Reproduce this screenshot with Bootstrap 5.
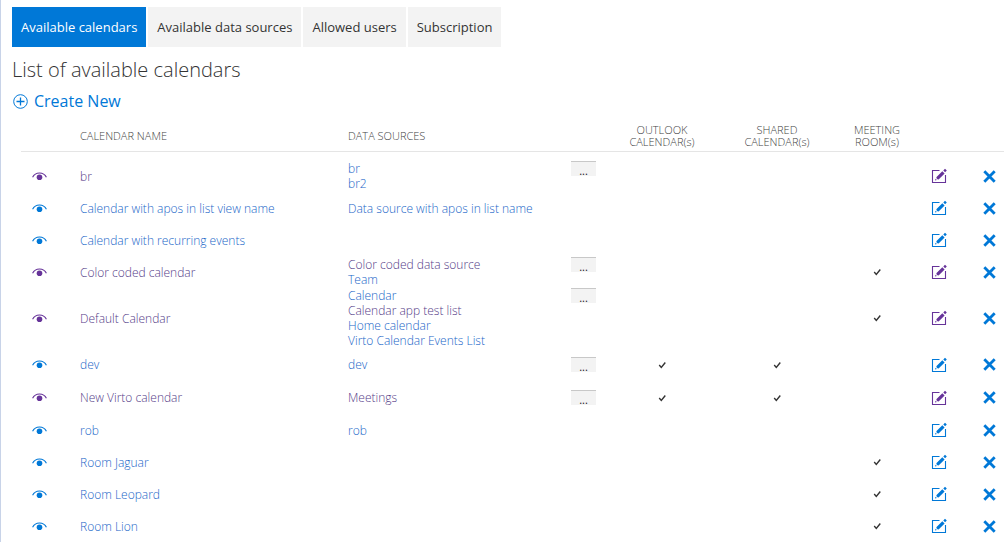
<!DOCTYPE html>
<html lang="en">
<head>
<meta charset="utf-8">
<meta name="viewport" content="width=device-width, initial-scale=1">
<title>Available calendars</title>
<link href="https://cdn.jsdelivr.net/npm/bootstrap@5.3.0/dist/css/bootstrap.min.css" rel="stylesheet">
<style>
  :root { --accent: #0078d7; --visited: #663399; --link: #1a66c8; --link-seen: #553c88; }
  body { font-family: "Open Sans", "Noto Sans", sans-serif; font-size: 12px; line-height: 15px; color: #333; font-weight: 300; background: #fff; }
  main { border-left: 1px solid #c8d3e8; padding: 7px 0 0 11px; min-height: 100vh; }
  .tabs { gap: 2px; }
  .tabs .nav-link { height: 40px; padding: 0 9px; line-height: 40px; font-size: 13px; font-weight: 400; color: #333; background: #f3f3f3; border-radius: 0; white-space: nowrap; }
  .tabs .nav-link.active { color: #fff; background: var(--accent); }
  h1 { font-size: 20px; line-height: 28px; font-weight: 300; margin: 9px 0 7px; color: #333; }
  .create { font-size: 16px; line-height: 20px; font-weight: 400; color: var(--accent); text-decoration: none; gap: 6px; }
  .create svg { width: 15px; height: 15px; margin-left: 1px; }
  .calendars { table-layout: fixed; width: 100%; border-collapse: collapse; }
  .wrap { padding-left: 9px; margin-top: 9px; }
  .calendars td, .calendars th { padding: 0; vertical-align: middle; }
  .calendars thead th { height: 31px; font-size: 11px; line-height: 12px; font-weight: 300; color: #444; }
  .calendars thead tr:first-child { border-bottom: 1px solid #e5e5e5; }
  .calendars tbody::before { content: ""; display: block; height: 8px; }
  .calendars tbody td { height: 32px; }
  .calendars tbody .tall td { height: 33px; }
  .c-view { width: 59px; } .c-name { width: 268px; } .c-out { width: 84px; }
  .c-shared { width: 146px; } .c-room { width: 54px; } .c-edit { width: 70px; } .c-del { width: 30px; }
  .calendars a { color: var(--link); text-decoration: none; }
  .calendars a.seen { color: var(--link-seen); }
  .calendars a.view, .calendars a.edit { color: var(--accent); }
  .calendars a.view.seen, .calendars a.edit.seen { color: var(--visited); }
  .calendars a:hover { text-decoration: underline; }
  .view { display: block; padding-left: 11px; }
  .calendars svg { display: block; }
  .view svg { width: 15px; height: 9px; }
  .edit svg { width: 16px; height: 16px; margin: 0 auto; }
  .tick { width: 9px; height: 8px; margin: 0 auto; color: #333; }
  .more { width: 25px; height: 15px; margin-right: 24px; padding: 3px 0 0; border: 0; border-top: 1px solid #c8c8c8; border-radius: 0; background: #f3f3f3; color: #222; font-size: 11px; line-height: 11px; flex: none; }
  .remove { display: block; width: 30px; padding: 0; border: 0; background: none; color: var(--accent); }
  .remove svg { width: 13px; height: 13px; margin: 0 auto; }
</style>
</head>
<body>
<svg class="d-none" aria-hidden="true">
  <symbol id="eye" viewBox="0 0 15 9"><path d="M.6 5.200C2 2.400 4.600 1 7.500 1s5.500 1.400 6.900 4.200" fill="none" stroke="currentColor" stroke-width="1.100"/><circle cx="7.500" cy="5.200" r="2.800" fill="currentColor"/></symbol>
  <symbol id="pencil" viewBox="0 0 16 16"><path d="M8.500 2.500H1.500v12h13V7" fill="none" stroke="currentColor" stroke-width="1.100"/><path d="M4 12.600l.5-1.900 1.400 1.400zM5.300 9.300l6-6 2.300 2.300-6 6-1.700-.5zM12.300 2.600L14 .7l1.800 1.700-1.700 1.900z" fill="currentColor"/></symbol>
  <symbol id="cross" viewBox="0 0 13 13"><path d="M1.300 1.300l10.400 10.400M11.700 1.300L1.300 11.700" fill="none" stroke="currentColor" stroke-width="2.800"/></symbol>
  <symbol id="check" viewBox="0 0 9 8"><path d="M1.200 4l2.100 2.400 4-4.900" fill="none" stroke="currentColor" stroke-width="1.400"/></symbol>
</svg>
<main>
  <nav class="nav tabs" aria-label="Sections">
    <a class="nav-link active" href="#" aria-current="page">Available calendars</a>
    <a class="nav-link" href="#">Available data sources</a>
    <a class="nav-link" href="#">Allowed users</a>
    <a class="nav-link" href="#">Subscription</a>
  </nav>
  <h1>List of available calendars</h1>
  <a class="create d-inline-flex align-items-center" href="#"><svg viewBox="0 0 15 15" fill="none" stroke="currentColor" aria-hidden="true"><circle cx="7.500" cy="7.500" r="6.800"/><path d="M7.500 3.500v8M3.500 7.500h8" stroke-width="1.300"/></svg>Create New</a>
  <div class="wrap">
  <table class="calendars">
    <colgroup><col class="c-view"><col class="c-name"><col><col class="c-out"><col class="c-shared"><col class="c-room"><col class="c-edit"><col class="c-del"></colgroup>
    <thead>
      <tr><th></th><th scope="col">CALENDAR NAME</th><th scope="col">DATA SOURCES</th><th scope="col" class="text-center">OUTLOOK<br>CALENDAR(s)</th><th scope="col" class="text-center">SHARED<br>CALENDAR(s)</th><th scope="col" class="text-center">MEETING<br>ROOM(s)</th><th></th><th></th></tr>
    </thead>
    <tbody>
      <tr>
        <td><a class="view seen" href="#" aria-label="View"><svg><use href="#eye"/></svg></a></td>
        <td><a class="seen" href="#">br</a></td>
        <td><div class="d-flex justify-content-between align-items-start"><div><a href="#">br</a><br><a href="#">br2</a></div><button type="button" class="more">...</button></div></td>
        <td></td><td></td><td></td>
        <td><a class="edit seen" href="#" aria-label="Edit"><svg><use href="#pencil"/></svg></a></td>
        <td><button type="button" class="remove" aria-label="Delete"><svg><use href="#cross"/></svg></button></td>
      </tr>
      <tr>
        <td><a class="view" href="#" aria-label="View"><svg><use href="#eye"/></svg></a></td>
        <td><a href="#">Calendar with apos in list view name</a></td>
        <td><a href="#">Data source with apos in list name</a></td>
        <td></td><td></td><td></td>
        <td><a class="edit" href="#" aria-label="Edit"><svg><use href="#pencil"/></svg></a></td>
        <td><button type="button" class="remove" aria-label="Delete"><svg><use href="#cross"/></svg></button></td>
      </tr>
      <tr>
        <td><a class="view" href="#" aria-label="View"><svg><use href="#eye"/></svg></a></td>
        <td><a href="#">Calendar with recurring events</a></td>
        <td></td>
        <td></td><td></td><td></td>
        <td><a class="edit" href="#" aria-label="Edit"><svg><use href="#pencil"/></svg></a></td>
        <td><button type="button" class="remove" aria-label="Delete"><svg><use href="#cross"/></svg></button></td>
      </tr>
      <tr>
        <td><a class="view seen" href="#" aria-label="View"><svg><use href="#eye"/></svg></a></td>
        <td><a class="seen" href="#">Color coded calendar</a></td>
        <td><div class="d-flex justify-content-between align-items-start"><div><a class="seen" href="#">Color coded data source</a><br><a href="#">Team</a></div><button type="button" class="more">...</button></div></td>
        <td></td><td></td><td><svg class="tick"><use href="#check"/></svg></td>
        <td><a class="edit seen" href="#" aria-label="Edit"><svg><use href="#pencil"/></svg></a></td>
        <td><button type="button" class="remove" aria-label="Delete"><svg><use href="#cross"/></svg></button></td>
      </tr>
      <tr>
        <td><a class="view seen" href="#" aria-label="View"><svg><use href="#eye"/></svg></a></td>
        <td><a class="seen" href="#">Default Calendar</a></td>
        <td><div class="d-flex justify-content-between align-items-start"><div><a href="#">Calendar</a><br><a class="seen" href="#">Calendar app test list</a><br><a href="#">Home calendar</a><br><a href="#">Virto Calendar Events List</a></div><button type="button" class="more">...</button></div></td>
        <td></td><td></td><td><svg class="tick"><use href="#check"/></svg></td>
        <td><a class="edit seen" href="#" aria-label="Edit"><svg><use href="#pencil"/></svg></a></td>
        <td><button type="button" class="remove" aria-label="Delete"><svg><use href="#cross"/></svg></button></td>
      </tr>
      <tr class="tall">
        <td><a class="view" href="#" aria-label="View"><svg><use href="#eye"/></svg></a></td>
        <td><a href="#">dev</a></td>
        <td><div class="d-flex justify-content-between align-items-start"><div><a href="#">dev</a></div><button type="button" class="more">...</button></div></td>
        <td><svg class="tick"><use href="#check"/></svg></td><td><svg class="tick"><use href="#check"/></svg></td><td></td>
        <td><a class="edit" href="#" aria-label="Edit"><svg><use href="#pencil"/></svg></a></td>
        <td><button type="button" class="remove" aria-label="Delete"><svg><use href="#cross"/></svg></button></td>
      </tr>
      <tr class="tall">
        <td><a class="view seen" href="#" aria-label="View"><svg><use href="#eye"/></svg></a></td>
        <td><a class="seen" href="#">New Virto calendar</a></td>
        <td><div class="d-flex justify-content-between align-items-start"><div><a class="seen" href="#">Meetings</a></div><button type="button" class="more">...</button></div></td>
        <td><svg class="tick"><use href="#check"/></svg></td><td><svg class="tick"><use href="#check"/></svg></td><td></td>
        <td><a class="edit seen" href="#" aria-label="Edit"><svg><use href="#pencil"/></svg></a></td>
        <td><button type="button" class="remove" aria-label="Delete"><svg><use href="#cross"/></svg></button></td>
      </tr>
      <tr>
        <td><a class="view" href="#" aria-label="View"><svg><use href="#eye"/></svg></a></td>
        <td><a href="#">rob</a></td>
        <td><a href="#">rob</a></td>
        <td></td><td></td><td></td>
        <td><a class="edit" href="#" aria-label="Edit"><svg><use href="#pencil"/></svg></a></td>
        <td><button type="button" class="remove" aria-label="Delete"><svg><use href="#cross"/></svg></button></td>
      </tr>
      <tr>
        <td><a class="view" href="#" aria-label="View"><svg><use href="#eye"/></svg></a></td>
        <td><a href="#">Room Jaguar</a></td>
        <td></td>
        <td></td><td></td><td><svg class="tick"><use href="#check"/></svg></td>
        <td><a class="edit" href="#" aria-label="Edit"><svg><use href="#pencil"/></svg></a></td>
        <td><button type="button" class="remove" aria-label="Delete"><svg><use href="#cross"/></svg></button></td>
      </tr>
      <tr>
        <td><a class="view" href="#" aria-label="View"><svg><use href="#eye"/></svg></a></td>
        <td><a href="#">Room Leopard</a></td>
        <td></td>
        <td></td><td></td><td><svg class="tick"><use href="#check"/></svg></td>
        <td><a class="edit" href="#" aria-label="Edit"><svg><use href="#pencil"/></svg></a></td>
        <td><button type="button" class="remove" aria-label="Delete"><svg><use href="#cross"/></svg></button></td>
      </tr>
      <tr>
        <td><a class="view" href="#" aria-label="View"><svg><use href="#eye"/></svg></a></td>
        <td><a href="#">Room Lion</a></td>
        <td></td>
        <td></td><td></td><td><svg class="tick"><use href="#check"/></svg></td>
        <td><a class="edit" href="#" aria-label="Edit"><svg><use href="#pencil"/></svg></a></td>
        <td><button type="button" class="remove" aria-label="Delete"><svg><use href="#cross"/></svg></button></td>
      </tr>
    </tbody>
  </table>
  </div>
</main>
<script src="https://cdn.jsdelivr.net/npm/bootstrap@5.3.0/dist/js/bootstrap.bundle.min.js"></script>
</body>
</html>
